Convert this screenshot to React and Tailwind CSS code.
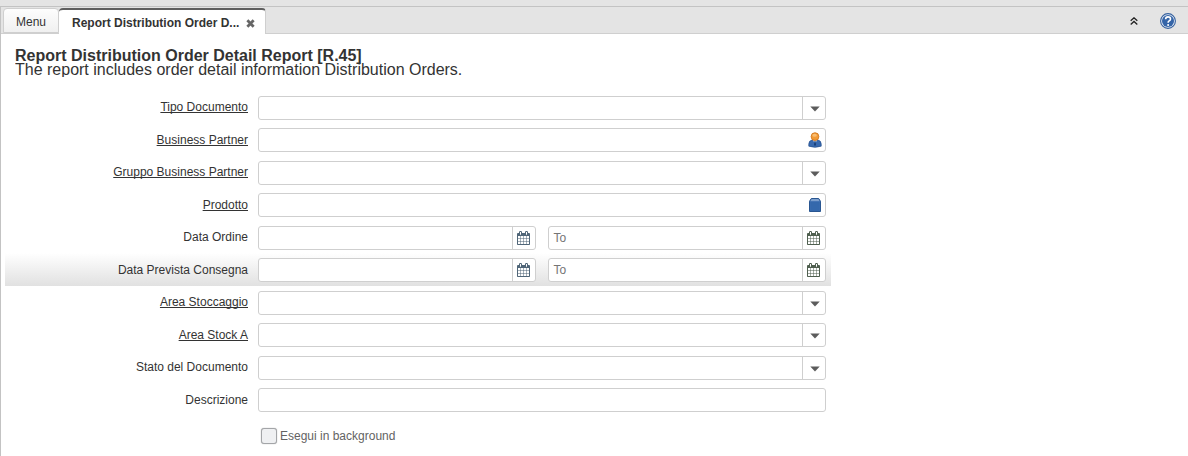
import React from "react";

const CALENDAR =
  "M192 1664h288v-288h-288v288zm352 0h320v-288h-320v288zm-352-352h288v-320h-288v320zm352 0h320v-320h-320v320zm-352-384h288v-288h-288v288zm736 736h320v-288h-320v288zm-384-736h320v-288h-320v288zm768 736h288v-288h-288v288zm-384-352h320v-320h-320v320zm-352-864v-288q0-13-9.5-22.5t-22.5-9.5h-64q-13 0-22.5 9.5t-9.5 22.5v288q0 13 9.5 22.5t22.5 9.5h64q13 0 22.5-9.5t9.5-22.5zm736 864h288v-320h-288v320zm-384-384h320v-288h-320v288zm384 0h288v-288h-288v288zm32-480v-288q0-13-9.5-22.5t-22.5-9.5h-64q-13 0-22.5 9.5t-9.5 22.5v288q0 13 9.5 22.5t22.5 9.5h64q13 0 22.5-9.5t9.5-22.5zm384-64v1280q0 52-38 90t-90 38h-1408q-52 0-90-38t-38-90v-1280q0-52 38-90t90-38h128v-96q0-66 47-113t113-47h64q66 0 113 47t47 113v96h384v-96q0-66 47-113t113-47h64q66 0 113 47t47 113v96h128q52 0 90 38t38 90z";

function CalendarIcon({ green }) {
  return (
    <svg viewBox="64 0 1664 1792" className={"mr-[1px] h-[14px] w-[13px] " + (green ? "text-[#4f5f4f]" : "text-[#506678]")}>
      <path d={CALENDAR} fill="currentColor" />
    </svg>
  );
}

function CaretIcon() {
  return (
    <svg viewBox="0 0 10 6" className="mt-px ml-px h-[6px] w-[10px]">
      <path d="M.3.5h9.4L5 5.6z" fill="#5c5c5c" />
    </svg>
  );
}

function PersonIcon() {
  return (
    <svg viewBox="0 0 14 16" className="ml-[2px] h-4 w-[14px]">
      <path d="M.8 14.2V12q0-3.4 3.4-4h5.6q3.4.6 3.4 4v2.2Q7 16.4.8 14.2z" fill="#3869ae" stroke="#254f8d" strokeWidth=".7" />
      <path d="M4.7 8.3 7 11l2.3-2.7z" fill="#dfe8f4" />
      <path d="M6.5 9h1l.5 4-1 1-1-1z" fill="#173e79" />
      <circle cx="7" cy="4.6" r="3.9" fill="#f29a35" stroke="#ce741b" strokeWidth=".8" />
      <ellipse cx="6.6" cy="3.2" rx="2.3" ry="1.5" fill="#f9bd71" />
    </svg>
  );
}

function ProductIcon() {
  return (
    <svg viewBox="0 0 12 14" className="ml-[2px] h-[14px] w-3">
      <path d="M2.3.5h7.4l1.8 2.8v10.2H.5V3.3z" fill="#3a6db0" stroke="#295691" />
      <path d="M2.6 1h6.800l1.200 2.200H1.400z" fill="#7d9fcd" />
      <path d="M1.500 3.700h9v9.200h-9z" fill="#3468ac" />
    </svg>
  );
}

function Field({ className = "w-[568px]", placeholder, button, children }) {
  return (
    <div className={"flex h-6 shrink-0 overflow-hidden rounded-[3px] border border-[#cfcfcf] bg-white " + className}>
      <div className="flex-1 pl-[4.500px] text-[12px] leading-[22px] text-[#757575]">{placeholder}</div>
      {children && (
        <div className={"flex w-[23px] items-center justify-center " + (button ? "border-l border-[#cfcfcf]" : "")}>
          {children}
        </div>
      )}
    </div>
  );
}

const rows = [
  { label: "Tipo Documento", kind: "select", link: true },
  { label: "Business Partner", kind: "person", link: true },
  { label: "Gruppo Business Partner", kind: "select", link: true },
  { label: "Prodotto", kind: "product", link: true },
  { label: "Data Ordine", kind: "date" },
  { label: "Data Prevista Consegna", kind: "date", active: true },
  { label: "Area Stoccaggio", kind: "select", link: true },
  { label: "Area Stock A", kind: "select", link: true },
  { label: "Stato del Documento", kind: "select" },
  { label: "Descrizione", kind: "text" },
];

function Control({ kind }) {
  if (kind === "select") return <Field button><CaretIcon /></Field>;
  if (kind === "person") return <Field><PersonIcon /></Field>;
  if (kind === "product") return <Field><ProductIcon /></Field>;
  if (kind === "date")
    return (
      <>
        <Field button className="w-[278px]"><CalendarIcon /></Field>
        <Field button className="ml-3 w-[278px]" placeholder="To"><CalendarIcon green /></Field>
      </>
    );
  return <Field />;
}

function Row({ row, odd }) {
  return (
    <div
      className={
        "flex w-[826px] items-start pt-[5px] " +
        (odd ? "h-[33px] " : "h-8 ") +
        (row.active ? "bg-linear-to-b from-white to-[#e1e1e1]" : "")
      }
    >
      <div className={"w-[243px] shrink-0 text-right text-[12px] text-[#333] " + (odd ? "leading-6" : "leading-[22px]")}>
        <span className={row.link ? "underline [text-decoration-skip-ink:none]" : ""}>{row.label}</span>
      </div>
      <div className="ml-[10px] flex"><Control kind={row.kind} /></div>
    </div>
  );
}

export default function App() {
  return (
    <div className="flex h-[456px] w-[1188px] flex-col overflow-hidden bg-white font-['Liberation_Sans',Arial,sans-serif] text-[#333]">
      <div className="h-[6px] shrink-0 bg-[#e4e4e4]" />
      <div className="flex flex-1 flex-col border-t border-l border-[#c3c3c3]">
        <div className="flex h-[27px] shrink-0 items-start border-b border-[#cfcfcf] bg-[#e4e4e4] pt-px pl-[2px]">
          <div className="flex h-[25px] w-[56px] items-center justify-center rounded-t-[4px] border border-[#cfcfcf] bg-linear-to-b from-[#fdfdfd] to-[#f0f0f0] pt-[2px] text-[12px]">
            Menu
          </div>
          <div className="flex h-[26px] w-[207px] items-center rounded-t-[4px] border-t-2 border-r border-t-[#5f5f5f] border-r-[#cfcfcf] bg-white pt-px pl-[13px] text-[12px] font-bold">
            <span className="whitespace-nowrap">Report Distribution Order D...</span>
            <svg viewBox="0 0 8 8" className="mt-px ml-[7px] size-[9px]">
              <path d="M1.200 1.200l5.600 5.600M6.800 1.200 1.200 6.800" stroke="#666" strokeWidth="2.500" />
            </svg>
          </div>
          <div className="ml-auto flex h-[26px] items-center pr-3">
            <svg viewBox="0 0 8 8" className="mr-[22px] size-2">
              <path d="M.7 3.800 4 .8l3.300 3M.7 7.500 4 4.500l3.300 3" stroke="#222" strokeWidth="1.300" fill="none" />
            </svg>
            <svg viewBox="0 0 16 16" className="size-4">
              <circle cx="8" cy="8" r="7.400" fill="#e8eef6" stroke="#36619e" strokeWidth="1.100" />
              <circle cx="8" cy="8" r="6" fill="#3565a8" />
              <path d="M5.600 6.200Q5.700 3.900 8 3.900q2.500 0 2.500 2 0 1.200-1.300 2Q8.100 8.600 8.100 9.700" fill="none" stroke="#fff" strokeWidth="1.600" />
              <circle cx="8.100" cy="11.900" r="1" fill="#fff" />
            </svg>
          </div>
        </div>
        <div className="flex h-[57px] shrink-0 flex-col pt-[15px] pl-[14px] text-[16px] leading-[14px]">
          <div className="font-bold whitespace-nowrap">Report Distribution Order Detail Report [R.45]</div>
          <div className="h-[14px] overflow-hidden whitespace-nowrap">The report includes order detail information Distribution Orders.</div>
        </div>
        <div className="flex flex-col pl-1">
          {rows.map((row, i) => <Row key={row.label} row={row} odd={i % 2 === 1} />)}
        </div>
        <div className="flex items-center pt-[12px] pl-[260px] text-[12px] leading-4 text-[#636363]">
          <div className="size-4 rounded-[3px] border border-[#a3a5a8] bg-[#eff0f2] shadow-[0_0_1px_#999]" />
          <span className="ml-[3px]">Esegui in background</span>
        </div>
      </div>
    </div>
  );
}
